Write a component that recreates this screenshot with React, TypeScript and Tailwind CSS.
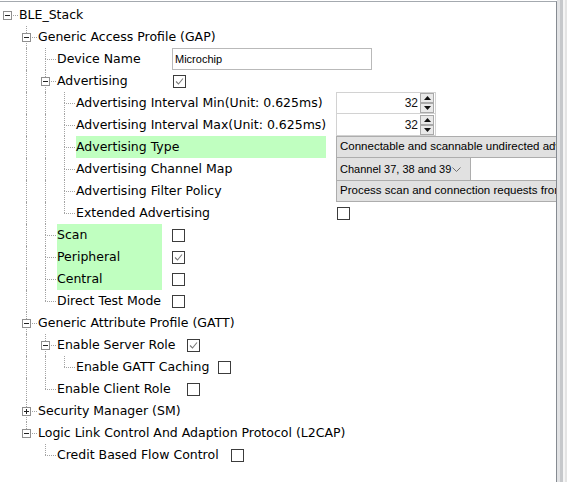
import React from 'react'

type Item = {
  label: string
  open?: boolean
  kids?: Item[]
  w?: string
  green?: boolean
  value?: React.ReactNode
  vm?: string
}

type Row = { n: Item; level: number; guides: boolean[]; hasNext: boolean; hasPrev: boolean }

const wfont = "font-['Liberation_Sans',sans-serif]"

const Check = ({ on }: { on?: boolean }) => (
  <span className="flex h-[13px] w-[13px] items-center justify-center border border-[#3c3c3c] bg-white">
    {on && (
      <svg width="9" height="9" viewBox="0 0 9 9">
        <path d="M1 4.5 L3.5 7 L8 1.5" fill="none" stroke="#7a7a7a" strokeWidth="1.1" />
      </svg>
    )}
  </span>
)

const SpinBtn = ({ up }: { up?: boolean }) => (
  <span className="flex h-[10px] w-[14px] items-center justify-center border border-[#a9a9a9] bg-[#e9e9e9]">
    <svg width="7" height="4" viewBox="0 0 7 4">
      <path d={up ? 'M0 4 L3.5 0 L7 4 Z' : 'M0 0 L3.5 4 L7 0 Z'} fill="#111" />
    </svg>
  </span>
)

const Spinner = ({ val, top = true }: { val: string; top?: boolean }) => (
  <div
    className={`flex h-[22px] w-[100px] items-center border border-[#d2d2d2] bg-white pr-[1px] ${wfont} ${top ? '' : 'border-t-0'}`}
  >
    <span className="flex-1 pr-[2px] text-right text-[12px] text-[#111]">{val}</span>
    <div className="flex flex-col">
      <SpinBtn up />
      <SpinBtn />
    </div>
  </div>
)

const Combo = ({ text }: { text: string }) => (
  <div
    className={`flex h-[22px] w-[230px] shrink-0 items-center overflow-hidden border border-[#adadad] bg-[#e1e1e1] pl-[3px] text-[11.5px] whitespace-nowrap ${wfont}`}
  >
    {text}
  </div>
)

const tree: Item[] = [
  {
    label: 'BLE_Stack',
    open: true,
    kids: [
      {
        label: 'Generic Access Profile (GAP)',
        open: true,
        kids: [
          {
            label: 'Device Name',
            w: 'w-[105px]',
            value: (
              <div className={`flex h-[22px] w-[200px] items-center border border-[#b9b9b9] bg-white pl-[2px] text-[11px] ${wfont}`}>
                Microchip
              </div>
            ),
          },
          {
            label: 'Advertising',
            w: 'w-[105px]',
            vm: 'ml-[11px]',
            value: <Check on />,
            open: true,
            kids: [
              { label: 'Advertising Interval Min(Unit: 0.625ms)', w: 'w-[250px]', value: <Spinner val="32" /> },
              { label: 'Advertising Interval Max(Unit: 0.625ms)', w: 'w-[250px]', value: <Spinner val="32" top={false} /> },
              {
                label: 'Advertising Type',
                w: 'w-[250px]',
                green: true,
                value: <Combo text="Connectable and scannable undirected adver" />,
              },
              {
                label: 'Advertising Channel Map',
                w: 'w-[250px]',
                value: (
                  <div
                    className={`flex h-[22px] w-[135px] items-center border-x border-[#adadad] bg-[#e1e1e1] pl-[3px] text-[11px] whitespace-nowrap ${wfont}`}
                  >
                    <span className="flex-1">Channel 37, 38 and 39</span>
                    <svg className="mr-[9px] shrink-0" width="9" height="5" viewBox="0 0 9 5">
                      <path d="M0.5 0.5 L4.5 4.5 L8.5 0.5" fill="none" stroke="#6f6f6f" strokeWidth="1" />
                    </svg>
                  </div>
                ),
              },
              {
                label: 'Advertising Filter Policy',
                w: 'w-[250px]',
                value: <Combo text="Process scan and connection requests from a" />,
              },
              { label: 'Extended Advertising', w: 'w-[250px]', vm: 'ml-[11px]', value: <Check /> },
            ],
          },
          { label: 'Scan', w: 'w-[105px]', green: true, value: <Check /> },
          { label: 'Peripheral', w: 'w-[105px]', green: true, value: <Check on /> },
          { label: 'Central', w: 'w-[105px]', green: true, value: <Check /> },
          { label: 'Direct Test Mode', w: 'w-[105px]', value: <Check /> },
        ],
      },
      {
        label: 'Generic Attribute Profile (GATT)',
        open: true,
        kids: [
          {
            label: 'Enable Server Role',
            w: 'w-[120px]',
            value: <Check on />,
            open: true,
            kids: [{ label: 'Enable GATT Caching', w: 'w-[132px]', value: <Check /> }],
          },
          { label: 'Enable Client Role', w: 'w-[120px]', value: <Check /> },
        ],
      },
      { label: 'Security Manager (SM)', open: false, kids: [] },
      {
        label: 'Logic Link Control And Adaption Protocol (L2CAP)',
        open: true,
        kids: [{ label: 'Credit Based Flow Control', w: 'w-[164px]', value: <Check /> }],
      },
    ],
  },
]

function flatten(nodes: Item[], level: number, anc: boolean[], out: Row[]) {
  nodes.forEach((n, i) => {
    const last = i === nodes.length - 1
    out.push({ n, level, guides: anc, hasNext: !last, hasPrev: i > 0 || level > 0 })
    if (n.kids && n.open) flatten(n.kids, level + 1, [...anc, !last], out)
  })
}

const dot = 'border-dotted border-[#a3a3a3]'

const TreeRow = ({ r }: { r: Row }) => {
  const { n, guides, hasNext, hasPrev } = r
  return (
    <div className="flex h-[22px]">
      {guides.map((g, k) => (
        <div key={k} className="relative w-[19px] shrink-0">
          {g && <span className={`absolute top-0 left-[7px] h-full border-l ${dot}`} />}
        </div>
      ))}
      <div className="relative w-[19px] shrink-0">
        {hasPrev && <span className={`absolute top-0 left-[7px] h-[11px] border-l ${dot}`} />}
        {hasNext && <span className={`absolute top-[11px] bottom-0 left-[7px] border-l ${dot}`} />}
        <span className={`absolute top-[11px] left-[7px] w-[11px] border-t ${dot}`} />
        {n.kids && (
          <span className="absolute top-[7px] left-[3px] flex h-[9px] w-[9px] items-center justify-center border border-[#8f8f8f] bg-white">
            <span className="absolute h-px w-[5px] bg-[#222]" />
            {!n.open && <span className="absolute h-[5px] w-px bg-[#222]" />}
          </span>
        )}
      </div>
      <div
        className={`flex shrink-0 items-center pt-[1px] whitespace-nowrap ${n.w ?? ''} ${n.green ? 'bg-[#c0ffc0]' : ''}`}
      >
        {n.label}
      </div>
      {n.value && <div className={`flex shrink-0 items-center ${n.vm ?? 'ml-[10px]'}`}>{n.value}</div>}
    </div>
  )
}

export default function App() {
  const rows: Row[] = []
  flatten(tree, 0, [], rows)
  return (
    <div className="flex h-[482px] w-[567px] bg-white text-black">
      <div className="mt-[1px] flex w-[557px] shrink-0 flex-col overflow-hidden border-t border-r border-t-[#a4a9af] border-r-[#868b92] pt-[2px] font-['DejaVu_Sans',sans-serif] text-[12.5px]">
        {rows.map((r, i) => (
          <TreeRow key={i} r={r} />
        ))}
      </div>
      <div className="flex flex-1">
        <div className="w-[3px] bg-[#e2e3e5]" />
        <div className="w-[3px] bg-[#c6c8cb]" />
        <div className="w-[2px] bg-[#f5f5f5]" />
        <div className="flex-1 bg-[#e4e4e4]" />
      </div>
    </div>
  )
}
